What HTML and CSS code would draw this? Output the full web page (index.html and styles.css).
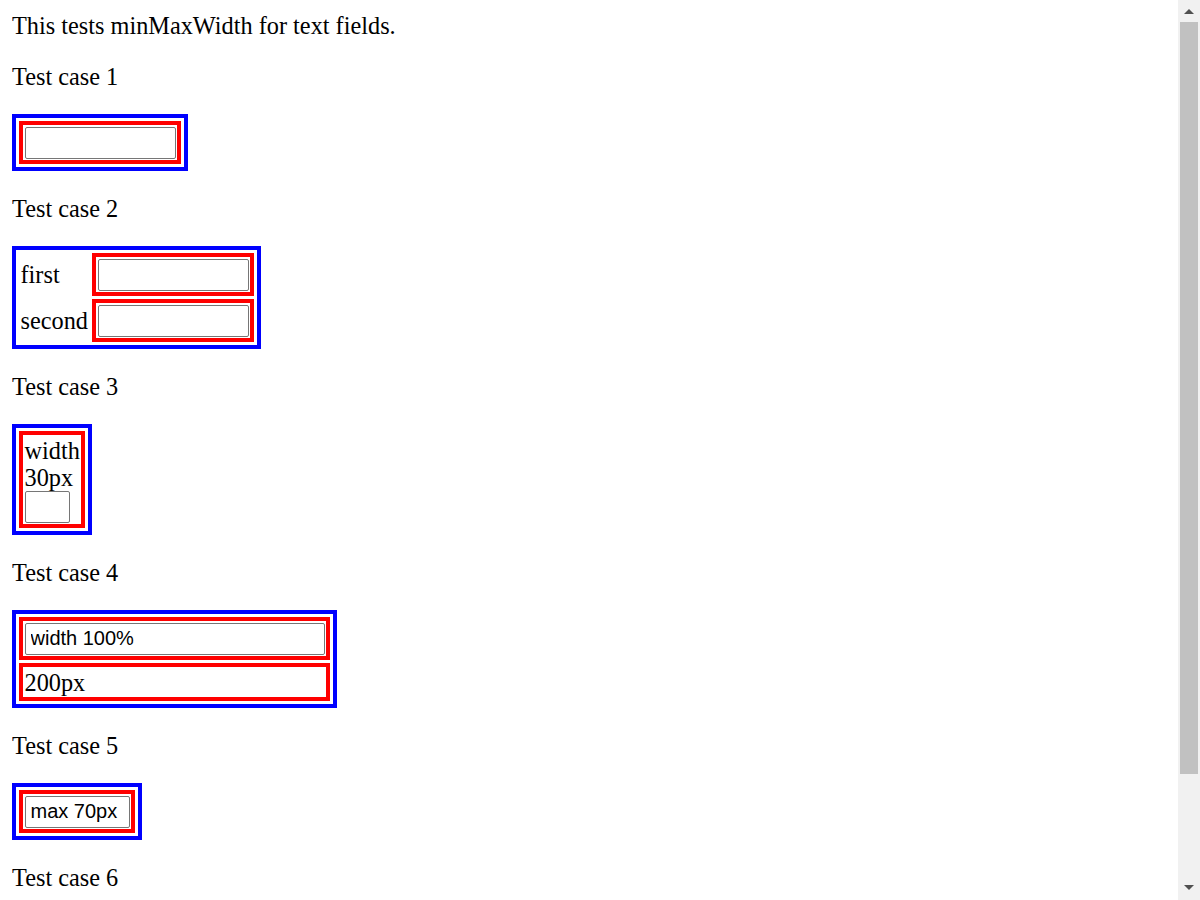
FILE: index.html
```html
<!DOCTYPE html>
<html>
<head>
<meta charset="utf-8">
<title>minMaxWidth for text fields</title>
<link rel="stylesheet" href="styles.css">
</head>
<body>
<div class="intro">This tests minMaxWidth for text fields.</div>

<p class="case">Test case 1</p>
<table class="outer">
  <tr><td class="cell"><input class="field field-default" type="text"></td></tr>
</table>

<p class="case">Test case 2</p>
<table class="outer">
  <tr><td class="name">first</td><td class="cell"><input class="field field-default" type="text"></td></tr>
  <tr><td class="name">second</td><td class="cell"><input class="field field-default" type="text"></td></tr>
</table>

<p class="case">Test case 3</p>
<table class="outer">
  <tr><td class="cell">width 30px<input class="field field-narrow" type="text"></td></tr>
</table>

<p class="case">Test case 4</p>
<table class="outer">
  <tr><td class="cell"><input class="field field-full" type="text" value="width 100%"></td></tr>
  <tr><td class="cell"><div class="fixed">200px</div></td></tr>
</table>

<p class="case">Test case 5</p>
<table class="outer">
  <tr><td class="cell"><input class="field field-max" type="text" value="max 70px"></td></tr>
</table>

<p class="case">Test case 6</p>
<table class="outer">
  <tr><td class="cell">min 100px<input class="field field-min" type="text"></td></tr>
</table>

<div class="scrollbar" aria-hidden="true">
  <svg class="arrow arrow-up" width="10" height="5" viewBox="0 0 10 5"><polygon points="0,5 10,5 5,0" fill="#505050"/></svg>
  <div class="thumb"></div>
  <svg class="arrow arrow-down" width="10" height="5" viewBox="0 0 10 5"><polygon points="0,0 10,0 5,5" fill="#505050"/></svg>
</div>
</body>
</html>
```

FILE: styles.css
```css
html {
  background: #ffffff;
}

body {
  margin: 12px;
  font-family: "Liberation Serif", "Times New Roman", serif;
  font-size: 24.3px;
  line-height: 27px;
  color: #000000;
}

.intro {
  margin: 0;
}

.case {
  margin: 24px 0;
}

.outer {
  border: 4px solid #0000ff;
  border-collapse: separate;
  border-spacing: 3px;
  width: 1px;
  font-size: 24.3px;
  line-height: 27px;
}

.cell {
  border: 4px solid #ff0000;
  padding: 1.5px;
  vertical-align: middle;
}

.name {
  padding: 1.5px;
  white-space: nowrap;
  vertical-align: middle;
}

.field {
  display: block;
  box-sizing: border-box;
  height: 32px;
  margin: 0;
  padding: 0 5px;
  border: 1px solid #767676;
  border-radius: 2px;
  background: #ffffff;
  color: #000000;
  font-family: "Liberation Sans", Arial, sans-serif;
  font-size: 20px;
  line-height: normal;
  outline: none;
}

.field-default {
  width: 151px;
}

.field-narrow {
  width: 45px;
}

.field-full {
  width: 100%;
}

.field-max {
  width: 105px;
}

.field-min {
  width: 150px;
}

.fixed {
  width: 300px;
}

/* painted classic scrollbar at the viewport edge */
.scrollbar {
  position: fixed;
  top: 0;
  right: 0;
  width: 22px;
  height: 100vh;
  background: #f1f1f1;
}

.thumb {
  position: absolute;
  left: 2px;
  top: 22px;
  width: 18px;
  height: 752px;
  background: #c1c1c1;
}

.arrow {
  position: absolute;
  left: 6px;
  display: block;
}

.arrow-up {
  top: 9px;
}

.arrow-down {
  top: 885px;
}
```
